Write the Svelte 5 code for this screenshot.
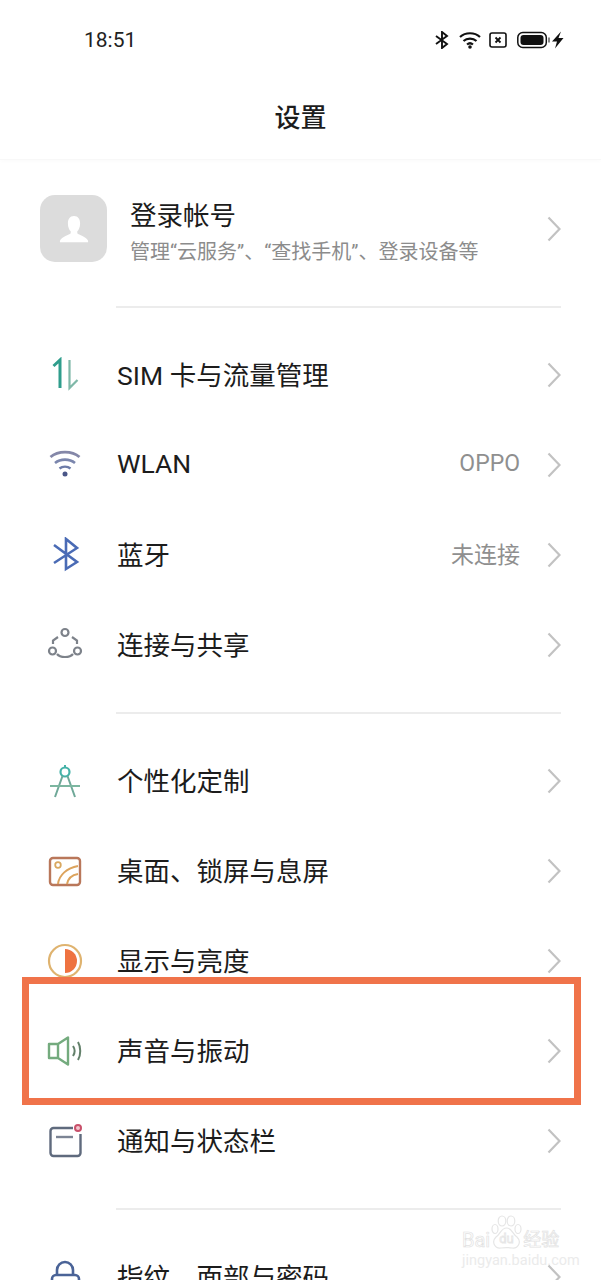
<script lang="ts">
	type Row = { label: string; icon: string; value?: string };

	const groupOne: Row[] = [
		{ label: 'SIM 卡与流量管理', icon: 'sim' },
		{ label: 'WLAN', icon: 'wifi', value: 'OPPO' },
		{ label: '蓝牙', icon: 'bt', value: '未连接' },
		{ label: '连接与共享', icon: 'share' }
	];
	const groupTwo: Row[] = [
		{ label: '个性化定制', icon: 'compass' },
		{ label: '桌面、锁屏与息屏', icon: 'wall' },
		{ label: '显示与亮度', icon: 'display' },
		{ label: '声音与振动', icon: 'sound' },
		{ label: '通知与状态栏', icon: 'notify' }
	];
	const groupThree: Row[] = [{ label: '指纹、面部与密码', icon: 'lock' }];
	const groups = [groupOne, groupTwo, groupThree];
</script>

{#snippet chevron()}
	<svg class="chevron" width="16" height="26" viewBox="0 0 16 26" fill="none">
		<path d="M3.500 1.500 14.500 13 3.500 24.500" stroke="#c2c2c2" stroke-width="2.200" />
	</svg>
{/snippet}

{#snippet rowIcon(name: string)}
	<svg class="icon" width="36" height="36" viewBox="0 0 36 36" fill="none">
		{#if name === 'sim'}
			<path d="M6.500 9 13 3V31" stroke="#2f9d8c" stroke-width="3" />
			<path d="M22.500 3V31L30.500 23" stroke="#7fb8a8" stroke-width="2.200" />
		{:else if name === 'wifi'}
			<path d="M3.500 10C11 3.500 25 3.500 32.500 10" stroke="#8487a8" stroke-width="2.800" />
			<path d="M8 16C13.500 11.500 22.500 11.500 28 16" stroke="#7b86ad" stroke-width="2.600" />
			<path d="M12.500 21.500C15.500 19 20.500 19 23.500 21.500" stroke="#6d7ba8" stroke-width="2.400" />
			<circle cx="18" cy="27" r="2.500" fill="#4a5688" />
		{:else if name === 'bt'}
			<path d="M7 26 30 11 19 2V32L30 25 7 8" stroke="#4a6bb5" stroke-width="2.600" />
		{:else if name === 'share'}
			<g stroke="#7d828a" stroke-width="2.200">
				<circle cx="18" cy="5.500" r="3.500" />
				<circle cx="5.500" cy="24" r="3.500" />
				<circle cx="30.500" cy="24" r="3.500" />
				<path d="M6 17V13.500L11 10M25 10 30 13.500V17M10 27C13 31 23 31 26 27" />
			</g>
		{:else if name === 'compass'}
			<circle cx="18" cy="9" r="4.500" stroke="#45b2a8" stroke-width="2.200" />
			<path d="M18 2V4.500" stroke="#45b2a8" stroke-width="2" />
			<path d="M15.500 13 8 34M20.500 13 28 34" stroke="#6fa898" stroke-width="2" />
			<path d="M3 23H33" stroke="#7cb6a0" stroke-width="2" />
		{:else if name === 'wall'}
			<rect x="3" y="5" width="30" height="27" rx="3" stroke="#b9775a" stroke-width="2.400" />
			<circle cx="11" cy="12" r="2.800" stroke="#d9a860" stroke-width="1.800" />
			<path d="M11 31C12 22 20 15 31 13M20 31C21 26 25 22 31 21" stroke="#dca35c" stroke-width="2" />
		{:else if name === 'display'}
			<circle cx="18" cy="18" r="16" stroke="#dfb36f" stroke-width="2.200" />
			<path d="M18 6A12 12 0 0 1 18 30Z" fill="#ee7240" />
		{:else if name === 'sound'}
			<path d="M2 11H11V25H2ZM11 11 21 4.500V31.500L11 25" stroke="#74ab7e" stroke-width="2.400" stroke-linejoin="round" />
			<path d="M26 13C28 16 28 20 26 23" stroke="#62806a" stroke-width="2" />
			<path d="M31 9C34 14 34 22 31 27" stroke="#62806a" stroke-width="2" />
		{:else if name === 'notify'}
			<path d="M26 5H6.500A3 3 0 0 0 3.500 8V30A3 3 0 0 0 6.500 33H30.500A3 3 0 0 0 33.500 30V11" stroke="#5f6a7d" stroke-width="2.400" />
			<path d="M9 14H26" stroke="#7c8494" stroke-width="2.400" />
			<circle cx="31" cy="5" r="3" stroke="#c8506a" stroke-width="2" fill="#f3c5cd" />
		{:else if name === 'lock'}
			<path d="M10 15V11A8 8 0 0 1 26 11V15" stroke="#4a6397" stroke-width="2.600" />
			<rect x="5" y="16" width="27" height="18" rx="4" stroke="#4a6397" stroke-width="2.600" />
		{/if}
	</svg>
{/snippet}

<main class="page">
	<div class="status">
		<span class="time">18:51</span>
		<div class="status-icons">
			<svg width="14" height="18" viewBox="0 0 14 18" fill="none">
				<path d="M1 13 12 5 7 1V17L12 13 1 5" stroke="#111" stroke-width="1.900" />
			</svg>
			<svg width="22" height="18" viewBox="0 0 22 18" fill="none">
				<path d="M1 6C6.500 1 15.500 1 21 6M4.500 10C8 6.800 14 6.800 17.500 10M8 13.500C9.800 12 12.200 12 14 13.500" stroke="#111" stroke-width="2.200" />
				<circle cx="11" cy="16" r="1.800" fill="#111" />
			</svg>
			<svg class="sim-x" width="18" height="16" viewBox="0 0 18 16" fill="none">
				<rect x="1" y="1" width="16" height="14" rx="2" stroke="#111" stroke-width="1.600" />
				<path d="M6.500 5.500 11.500 10.500M11.500 5.500 6.500 10.500" stroke="#111" stroke-width="1.800" />
			</svg>
			<svg width="47" height="18" viewBox="0 0 47 18" fill="none">
				<rect x="0.800" y="1.500" width="28.500" height="15" rx="5" stroke="#111" stroke-width="1.500" />
				<rect x="3.500" y="4" width="23" height="10" rx="3" fill="#111" />
				<rect x="31" y="6.500" width="2" height="5" fill="#888" />
				<path d="M44 0.500 35 10.500H40L38 17.500 46.500 7H41.500Z" fill="#111" />
			</svg>
		</div>
	</div>

	<header class="title">设置</header>

	<section class="account">
		<div class="avatar">
			<svg width="30" height="30" viewBox="0 0 32 32" fill="#fff">
				<path d="M16 2C11.500 2 9.500 5.500 9.500 10C9.500 14 11 17 12.500 18.500V20.500C11 22.500 3 24 1 28.500V30H31V28.500C29 24 21 22.500 19.500 20.500V18.500C21 17 22.500 14 22.500 10C22.500 5.500 20.500 2 16 2Z" />
			</svg>
		</div>
		<div class="account-text">
			<div class="account-name">登录帐号</div>
			<div class="account-sub">管理“云服务”、“查找手机”、登录设备等</div>
		</div>
		{@render chevron()}
	</section>

	{#each groups as group}
		<div class="divider"></div>
		<ul class="group">
			{#each group as row}
				<li class="row">
					<span class="icon-slot">{@render rowIcon(row.icon)}</span>
					<span class="label">{row.label}</span>
					{#if row.value}<span class="value">{row.value}</span>{/if}
					{@render chevron()}
				</li>
			{/each}
		</ul>
	{/each}

	<div class="highlight"></div>

	<div class="watermark">
		<div class="wm-top">
			<span class="wm-bai">Bai</span>
			<svg width="31" height="35" viewBox="0 0 31 35" fill="none" stroke="#e6e6e6" stroke-width="1.200">
				<ellipse cx="11" cy="6" rx="3.800" ry="5" />
				<ellipse cx="20" cy="6" rx="3.800" ry="5" />
				<ellipse cx="4" cy="14" rx="3" ry="4.500" />
				<ellipse cx="27" cy="14" rx="3" ry="4.500" />
				<path d="M15.500 13C10 13 9.500 19 5 22C0 27 4 34 10 33C13 32.500 18 32.500 21 33C27 34 31 27 26 22C21.500 19 21 13 15.500 13Z" />
				<text x="15.500" y="28" text-anchor="middle" font-size="13" stroke-width="0.800">du</text>
			</svg>
			<span class="wm-jy">经验</span>
		</div>
		<div class="wm-url">jingyan.baidu.com</div>
	</div>
</main>

<style>
	:global(body) {
		margin: 0;
		background: #fff;
	}
	.page {
		position: relative;
		width: 601px;
		height: 1280px;
		overflow: hidden;
		background: #fff;
		color: #1c1c1c;
		font-family: Roboto, 'Noto Sans CJK SC', sans-serif;
	}
	.status {
		display: flex;
		align-items: center;
		justify-content: space-between;
		height: 24px;
		padding: 28px 37px 0 84px;
	}
	.time {
		font-size: 21px;
		color: #222;
	}
	.status-icons {
		display: flex;
		align-items: center;
		gap: 10px;
	}
	.status-icons .sim-x {
		margin-left: -2px;
	}
	.title {
		display: flex;
		align-items: center;
		justify-content: center;
		height: 44px;
		margin-top: 41px;
		padding-bottom: 22px;
		border-bottom: 1px solid #f8f8f8;
		box-shadow: 0 2px 4px rgba(0, 0, 0, 0.015);
		font-size: 26px;
		font-weight: 500;
	}
	.account {
		display: flex;
		align-items: center;
		height: 67px;
		margin-top: 35px;
		padding: 0 40px;
	}
	.avatar {
		display: flex;
		align-items: center;
		justify-content: center;
		width: 67px;
		height: 67px;
		border-radius: 15px;
		background: #dcdcdc;
		flex-shrink: 0;
	}
	.account-text {
		flex: 1;
		margin-left: 23px;
		padding-top: 6px;
	}
	.account-name {
		font-size: 26.500px;
		line-height: 36px;
		color: #1c1c1c;
	}
	.account-sub {
		font-size: 20px;
		line-height: 28px;
		margin-top: 4px;
		color: #8c8c8c;
		white-space: nowrap;
	}
	.chevron {
		flex-shrink: 0;
	}
	.divider {
		height: 2px;
		margin: 0 40px 0 116px;
		background: #ececec;
	}
	.account + .divider {
		margin-top: 44px;
	}
	.group {
		list-style: none;
		margin: 0;
		padding: 22px 0;
	}
	.row {
		display: flex;
		align-items: center;
		height: 90px;
		padding: 0 40px 0 47px;
	}
	.icon-slot {
		display: flex;
		justify-content: center;
		width: 36px;
		margin-right: 34px;
	}
	.label {
		flex: 1;
		margin-bottom: 4px;
		font-size: 26.500px;
		color: #1c1c1c;
		white-space: nowrap;
	}
	.value {
		margin-right: 25px;
		margin-bottom: 4px;
		font-size: 23px;
		color: #8f8f8f;
	}
	.highlight {
		position: absolute;
		left: 22px;
		top: 977px;
		width: 559px;
		height: 128px;
		box-sizing: border-box;
		border: 7px solid #f0734a;
	}
	.watermark {
		position: absolute;
		left: 462px;
		top: 1215px;
		width: 106px;
		color: #ebebeb;
	}
	.wm-top {
		display: flex;
		align-items: flex-end;
		height: 35px;
		white-space: nowrap;
	}
	.wm-top svg {
		flex-shrink: 0;
		margin: 0 1px;
	}
	.wm-bai,
	.wm-jy {
		color: transparent;
		-webkit-text-stroke: 0.7px #e2e2e2;
		line-height: 20px;
	}
	.wm-bai {
		font-size: 20px;
	}
	.wm-jy {
		font-size: 18px;
	}
	.wm-url {
		margin-top: 2px;
		font-size: 14.500px;
		line-height: 18px;
		text-align: center;
		white-space: nowrap;
	}
</style>
